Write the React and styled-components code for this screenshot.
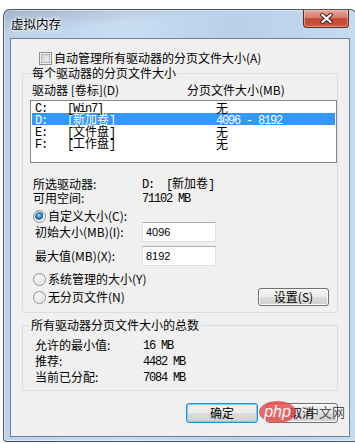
import styled, { createGlobalStyle } from 'styled-components';

const GlobalStyle = createGlobalStyle`
  html, body {
    margin: 0;
    padding: 0;
    background: #fff;
    overflow: hidden;
  }
  body {
    font-family: "Noto Sans CJK SC", "Liberation Sans", sans-serif;
    font-size: 12px;
    color: #000;
  }
`;

const Page = styled.div`
  position: relative;
  width: 355px;
  height: 444px;
  overflow: hidden;
  box-sizing: border-box;
  padding: 9px 0 0 3px;
  background: #fff;
`;

const Window = styled.div`
  width: 354px;
  height: 433px;
  box-sizing: border-box;
  border: 1px solid rgba(45, 55, 70, 0.8);
  border-radius: 7px 7px 4px 4px;
  padding: 0 6px 4px;
  display: flex;
  flex-direction: column;
  background:
    linear-gradient(174deg, rgba(110, 120, 140, 0.35) 0px, rgba(255, 255, 255, 0) 26px),
    linear-gradient(to right, #bcd2eb, #c9ddf2 35%, #b9d0e9 65%, #c6daf0);
  box-shadow: inset 0 0 0 1px rgba(255, 255, 255, 0.45);
`;

const TitleBar = styled.div`
  height: 28px;
  padding: 0 1px;
  display: flex;
  justify-content: space-between;
  align-items: flex-start;
`;

const Title = styled.div`
  align-self: center;
  font-size: 12.5px;
  line-height: 14px;
  color: #000;
  text-shadow: 0 0 6px #fff, 0 0 3px #fff, 0 0 2px #fff;
`;

const CloseButton = styled.div`
  width: 46px;
  height: 18px;
  box-sizing: border-box;
  border: 1px solid #5b2a22;
  border-top: none;
  border-radius: 0 0 4px 4px;
  display: flex;
  align-items: center;
  justify-content: center;
  background: linear-gradient(to bottom, #e9a99b 0%, #d67b68 45%, #c3432f 52%, #cc5a40 100%);
  box-shadow: inset 0 0 0 1px rgba(255, 210, 200, 0.5);
`;

const Client = styled.div`
  height: 399px;
  box-sizing: border-box;
  border: 1px solid #6e7f94;
  background: #f0f0f0;
  padding: 12px 11px 0;
  display: flex;
  flex-direction: column;
`;

const CheckRow = styled.label`
  height: 14px;
  padding-left: 17px;
  display: flex;
  align-items: center;
  gap: 2px;
  line-height: 14px;
`;

const CheckBox = styled.span`
  width: 13px;
  height: 13px;
  box-sizing: border-box;
  border: 1px solid #8e8f8f;
  background: linear-gradient(135deg, #cbd0d6, #f4f4f4);
  box-shadow: inset 0 0 0 1px #f4f4f4, inset 0 0 0 2px #aeb3b9;
`;

const Group = styled.fieldset`
  margin: ${p => p.$top}px 0 0;
  padding: 0 0 ${p => p.$bottom}px ${p => p.$left}px;
  border: 1px solid #d5dfe5;
  border-radius: 3px;
  min-width: 0;
`;

const GroupTitle = styled.legend`
  padding: 0 2px;
  margin-left: ${p => p.$shift || 0}px;
  height: 14px;
  line-height: 14px;
  font-size: 12px;
`;

const ListHeader = styled.div`
  margin: 3px 0 0 2px;
  height: 13px;
  line-height: 13px;
  display: grid;
  grid-template-columns: 155px 1fr;
`;

const ListBox = styled.div`
  margin-top: 4px;
  height: 63px;
  box-sizing: border-box;
  border: 1px solid #828790;
  background: #fff;
  padding: 0 1px;
`;

const DriveRow = styled.div`
  height: 12px;
  padding-left: 3px;
  display: grid;
  grid-template-columns: 32px 149px 1fr;
  align-items: center;
  line-height: 12px;
  background: ${p => (p.$selected ? '#3399ff' : 'transparent')};
  color: ${p => (p.$selected ? '#fff' : '#000')};
`;

const Cell = styled.span`
  white-space: pre;
`;

const Mono = styled.span`
  font-family: "Liberation Mono", monospace;
  font-size: 12px;
  letter-spacing: -1.2px;
  white-space: pre;
`;

const Han = styled.span`
  font-family: "Noto Sans CJK SC", sans-serif;
  font-size: 12px;
  letter-spacing: 0;
`;

const Details = styled.div`
  margin-top: 13px;
`;

const InfoRow = styled.div`
  height: ${p => p.$height || 14}px;
  padding-left: ${p => p.$indent}px;
  display: grid;
  grid-template-columns: ${p => p.$label}px 1fr;
  align-items: center;
  line-height: 14px;
`;

const RadioRow = styled.label`
  margin-top: ${p => p.$top}px;
  height: ${p => p.$height || 12}px;
  padding-left: 3px;
  padding-right: 8px;
  display: flex;
  align-items: center;
  gap: 2px;
  line-height: 12px;
`;

const Radio = styled.span`
  width: 13px;
  height: 13px;
  box-sizing: border-box;
  border-radius: 50%;
  border: 1px solid #8e8f8f;
  flex-shrink: 0;
  background: ${p =>
    p.$checked
      ? 'radial-gradient(circle at 45% 40%, #b9e3fb 0px, #3d8fd0 2px, #1d5f97 4px, #e9ebee 4.6px, #f4f4f4 100%)'
      : 'radial-gradient(circle at 40% 35%, #fafafa, #d8dbde 80%)'};
  box-shadow: inset 0 0 0 1px #f6f6f6;
`;

const SizeRow = styled.div`
  margin-top: ${p => p.$top}px;
  height: 20px;
  padding-left: 5px;
  display: grid;
  grid-template-columns: 107px 74px;
  align-items: center;
  line-height: 14px;
`;

const NumberInput = styled.input`
  width: 74px;
  height: 20px;
  box-sizing: border-box;
  margin: 0;
  padding: 0 3px;
  border: 1px solid #dbdfe6;
  border-top-color: #abadb3;
  background: #fff;
  font-family: "Liberation Sans", sans-serif;
  font-size: 11px;
  color: #000;
  outline: none;
`;

const Spacer = styled.div`
  flex: 1;
`;

const Button = styled.button`
  width: ${p => p.$width}px;
  height: ${p => p.$height}px;
  box-sizing: border-box;
  margin: 0;
  padding: 0;
  border: 1px solid ${p => (p.$default ? '#2c8fd0' : '#707070')};
  border-radius: 3px;
  background: linear-gradient(to bottom, #f2f2f2 0%, #ebebeb 50%, #dddddd 51%, #cfcfcf 100%);
  box-shadow: inset 0 0 0 1px ${p => (p.$default ? '#6fd1f6' : '#fcfcfc')};
  font-family: "Noto Sans CJK SC", sans-serif;
  font-size: 12px;
  line-height: 14px;
  color: #000;
`;

const Totals = styled.div`
  margin-top: 5px;
`;

const ButtonBar = styled.div`
  margin-top: 12px;
  display: flex;
  justify-content: flex-end;
  gap: 8px;
`;

const Watermark = styled.div`
  position: absolute;
  left: 259px;
  top: 401px;
  display: flex;
  align-items: center;
  pointer-events: none;
`;

const WatermarkBadge = styled.span`
  width: 37px;
  height: 22px;
  border-radius: 50%;
  background: rgba(229, 72, 72, 0.82);
  color: #fff;
  font-family: "Liberation Sans", sans-serif;
  font-style: italic;
  font-size: 16px;
  line-height: 21px;
  text-align: center;
`;

const WatermarkText = styled.span`
  margin-left: 10px;
  font-size: 13px;
  line-height: 16px;
  color: rgba(40, 40, 40, 0.8);
`;

const drives = [
  { letter: 'C:', label: 'Win7', size: null },
  { letter: 'D:', label: '新加卷', size: '4096 - 8192', selected: true },
  { letter: 'E:', label: '文件盘', size: null },
  { letter: 'F:', label: '工作盘', size: null },
];

const isAscii = s => /^[\x00-\x7f]*$/.test(s);

const VolumeLabel = ({ text }) =>
  isAscii(text) ? (
    <Cell><Mono>[{text}]</Mono></Cell>
  ) : (
    <Cell>
      <Mono>[</Mono>
      <Han>{text}</Han>
      <Mono>]</Mono>
    </Cell>
  );

const CloseIcon = () => (
  <svg width="13" height="11" viewBox="0 0 13 11">
    <path d="M2.5 2 L10.5 9 M10.5 2 L2.5 9" stroke="#3a2522" strokeWidth="4.2" strokeLinecap="square" />
    <path d="M2.5 2 L10.5 9 M10.5 2 L2.5 9" stroke="#fff" strokeWidth="2.2" strokeLinecap="square" />
  </svg>
);

export default function App() {
  return (
    <Page>
      <GlobalStyle />
      <Window>
        <TitleBar>
          <Title>虚拟内存</Title>
          <CloseButton>
            <CloseIcon />
          </CloseButton>
        </TitleBar>
        <Client>
          <CheckRow>
            <CheckBox />
            自动管理所有驱动器的分页文件大小(A)
          </CheckRow>

          <Group $top={1} $left={7} $bottom={6}>
            <GroupTitle>每个驱动器的分页文件大小</GroupTitle>
            <ListHeader>
              <span>驱动器 [卷标](D)</span>
              <span>分页文件大小(MB)</span>
            </ListHeader>
            <ListBox>
              {drives.map(d => (
                <DriveRow key={d.letter} $selected={d.selected}>
                  <Cell><Mono>{d.letter}</Mono></Cell>
                  <VolumeLabel text={d.label} />
                  <Cell>{d.size ? <Mono>{d.size}</Mono> : <Han>无</Han>}</Cell>
                </DriveRow>
              ))}
            </ListBox>

            <Details>
              <InfoRow $indent={3} $label={109}>
                <span>所选驱动器:</span>
                <Cell>
                  <Mono>D:  [</Mono>
                  <Han>新加卷</Han>
                  <Mono>]</Mono>
                </Cell>
              </InfoRow>
              <InfoRow $indent={3} $label={109}>
                <span>可用空间:</span>
                <Cell><Mono>71102 MB</Mono></Cell>
              </InfoRow>
            </Details>

            <RadioRow $top={6}>
              <Radio $checked />
              自定义大小(C):
            </RadioRow>
            <SizeRow $top={0}>
              <span>初始大小(MB)(I):</span>
              <NumberInput defaultValue="4096" />
            </SizeRow>
            <SizeRow $top={4}>
              <span>最大值(MB)(X):</span>
              <NumberInput defaultValue="8192" />
            </SizeRow>
            <RadioRow $top={7}>
              <Radio />
              系统管理的大小(Y)
            </RadioRow>
            <RadioRow $top={3} $height={18}>
              <Radio />
              无分页文件(N)
              <Spacer />
              <Button $width={71} $height={18}>设置(S)</Button>
            </RadioRow>
          </Group>

          <Group $top={5} $left={12} $bottom={5}>
            <GroupTitle $shift={-6}>所有驱动器分页文件大小的总数</GroupTitle>
            <Totals>
              <InfoRow $indent={0} $label={108} $height={16}>
                <span>允许的最小值:</span>
                <Cell><Mono>16 MB</Mono></Cell>
              </InfoRow>
              <InfoRow $indent={0} $label={108} $height={16}>
                <span>推荐:</span>
                <Cell><Mono>4482 MB</Mono></Cell>
              </InfoRow>
              <InfoRow $indent={0} $label={108} $height={16}>
                <span>当前已分配:</span>
                <Cell><Mono>7084 MB</Mono></Cell>
              </InfoRow>
            </Totals>
          </Group>

          <ButtonBar>
            <Button $width={72} $height={20} $default>确定</Button>
            <Button $width={72} $height={20}>取消</Button>
          </ButtonBar>
        </Client>
      </Window>
      <Watermark>
        <WatermarkBadge>php</WatermarkBadge>
        <WatermarkText>中文网</WatermarkText>
      </Watermark>
    </Page>
  );
}
